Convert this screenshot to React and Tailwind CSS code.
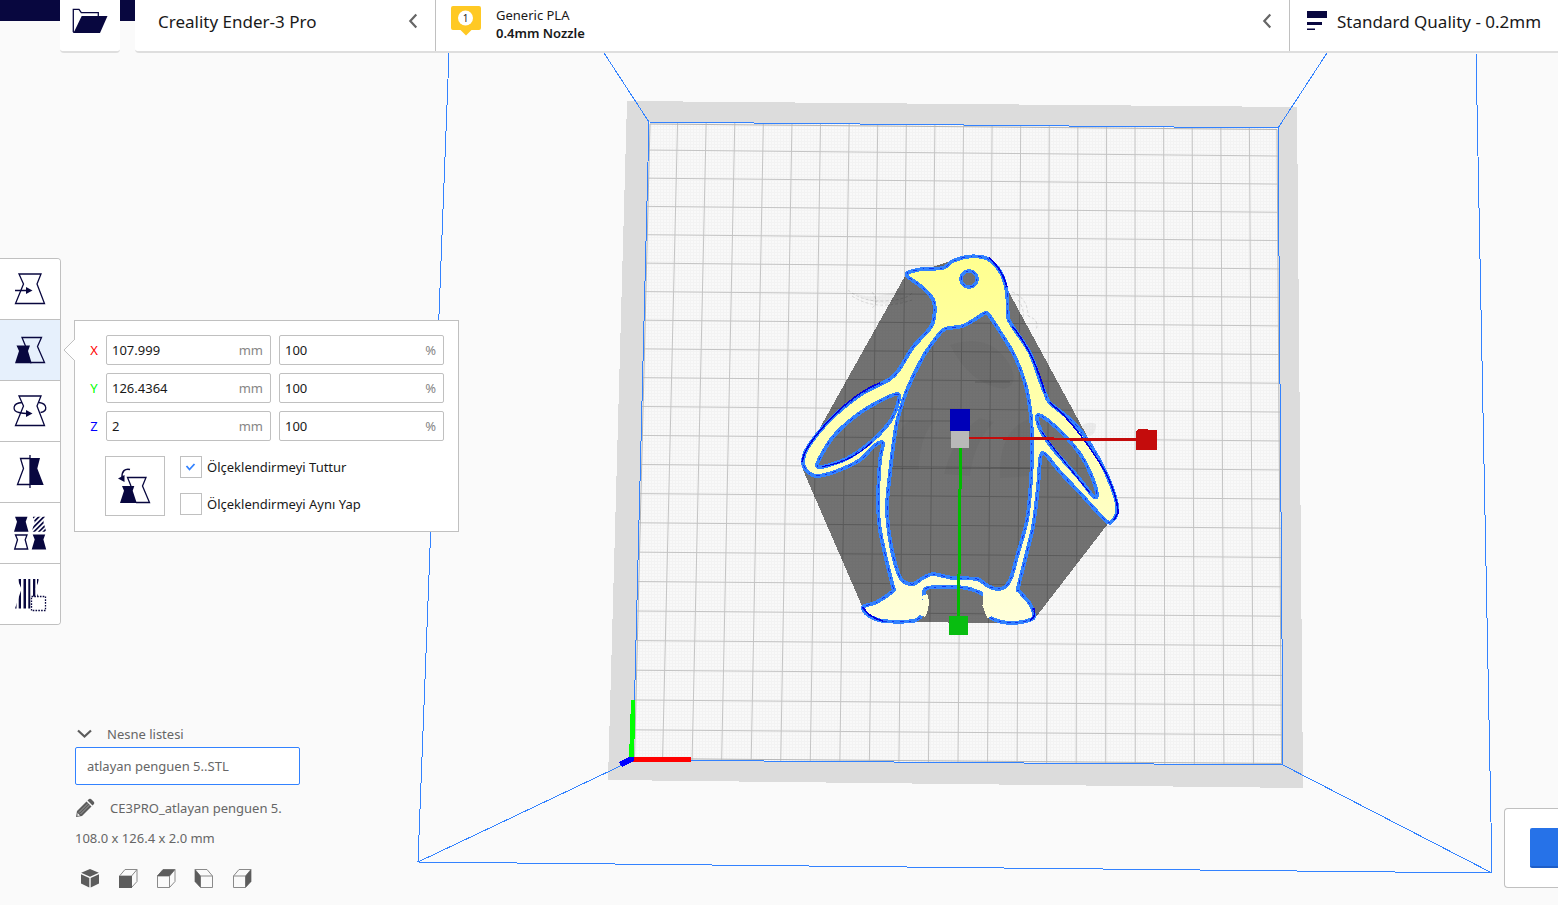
import React, { useState } from "react";

const NAVY = "#08073f";
const BLUE = "#3282ff";

/* ---------- geometry helpers ---------- */

// Closed Catmull-Rom curve through a list of points.
function smooth(pts) {
  const n = pts.length;
  const f = (v) => v.toFixed(1);
  let d = `M${pts[0][0]} ${pts[0][1]}`;
  for (let i = 0; i < n; i++) {
    const p0 = pts[(i - 1 + n) % n];
    const p1 = pts[i];
    const p2 = pts[(i + 1) % n];
    const p3 = pts[(i + 2) % n];
    const t = 7;
    d += `C${f(p1[0] + (p2[0] - p0[0]) / t)} ${f(p1[1] + (p2[1] - p0[1]) / t)} ${f(p2[0] - (p3[0] - p1[0]) / t)} ${f(p2[1] - (p3[1] - p1[1]) / t)} ${p2[0]} ${p2[1]}`;
  }
  return d + "Z";
}

const outer = [
  [907, 274], [909, 272], [923, 269], [943, 268], [953, 261], [970, 256.5], [988, 259], [1001, 273], [1007, 293], [1008, 317],
  [1013, 327], [1030, 353], [1041, 383], [1045, 393], [1050, 403], [1073, 422], [1090, 444], [1106, 473], [1116, 500], [1117, 512],
  [1113, 520], [1106, 521], [1080, 493], [1060, 472], [1047, 456], [1042, 453], [1040, 460], [1038, 487], [1033, 527], [1025, 560],
  [1018, 588], [1019, 591], [1030, 604], [1034, 616], [1030, 620], [1013, 623], [995, 620], [987, 613], [986, 597], [970, 589],
  [953, 587], [927, 588], [924, 596], [925, 604], [922, 615], [913, 621], [883, 621], [868, 615], [863, 607], [877, 602],
  [893, 591], [893, 587], [887, 563], [880, 530], [878, 503], [880, 460], [883, 445], [881, 442], [873, 447], [860, 460],
  [837, 471], [817, 476], [807, 471], [803, 462], [808, 447], [830, 420], [860, 395], [890, 379], [900, 368], [913, 347],
  [932, 325], [934, 302], [923, 288], [908, 277],
];
const belly = [
  [945, 329], [963, 326], [977, 318], [985, 313], [988, 314], [993, 321], [1013, 353], [1025, 383], [1031, 417], [1032, 453],
  [1031, 480], [1027, 520], [1018, 553], [1011, 578], [1005, 587], [997, 589], [988, 586], [977, 579], [953, 578], [933, 574],
  [923, 578], [913, 584], [903, 581], [897, 570], [890, 540], [887, 507], [890, 473], [894, 440], [898, 418], [907, 390],
  [923, 357], [937, 337],
];
const leftWing = [
  [897, 394], [899, 399], [891, 420], [872, 441], [846, 459], [821, 467], [818, 462], [833, 437], [857, 415], [880, 401],
];
const rightWing = [
  [1039, 415], [1037, 419], [1041, 431], [1054, 450], [1078, 477], [1093, 496], [1097, 495], [1092, 477], [1082, 457], [1066, 437], [1050, 422],
];
const eye = "M977 279a8 8 0 1 1-16 0a8 8 0 1 1 16 0Z";
const body = [smooth(outer), smooth(belly), smooth(leftWing), smooth(rightWing), eye].join(" ");

const CELLS = 22;
const columns = Array.from({ length: CELLS - 1 }, (_, k) => {
  const i = k + 1;
  return [649 + (629 * i) / CELLS, 122 + (6 * i) / CELLS, 633 + (650 * i) / CELLS, 760 + (5 * i) / CELLS];
});
const rows = Array.from({ length: CELLS - 1 }, (_, k) => {
  const i = k + 1;
  const s = (28 * i + 0.045 * i * i) / 638;
  return [649 - 16 * s, 122 + 638 * s, 1278 + 5 * s, 128 + 637 * s];
});

/* ---------- 3D view ---------- */

function BuildPlate() {
  return (
    <svg
      className="absolute inset-0 h-full w-full"
      viewBox="0 0 1558 905"
      preserveAspectRatio="xMidYMid slice"
      role="img"
      aria-label="atlayan penguen 5."
    >
      <defs>
        <pattern id="fine" width="3" height="3" patternUnits="userSpaceOnUse">
          <rect width="3" height="3" fill="#f9f9f9" />
          <path d="M0 .5H3M.5 0V3" stroke="#f3f3f3" />
        </pattern>
        <linearGradient id="model" x1="0" y1="0" x2="0" y2="1">
          <stop offset="0" stopColor="#ffff8f" />
          <stop offset=".5" stopColor="#ffffb4" />
          <stop offset="1" stopColor="#ffffda" />
        </linearGradient>
      </defs>

      <path d="M627 101L1297 107L1303 788L608 780Z" fill="#dcdcdc" shapeRendering="crispEdges" />
      <path d="M649 122L1278 128L1283 765L633 760Z" fill="url(#fine)" />
      <g stroke="#c4c4c4" strokeWidth="1">
        {columns.map(([a, b, c, d]) => (
          <line key={a} x1={a} y1={b} x2={c} y2={d} />
        ))}
        {rows.map(([a, b, c, d]) => (
          <line key={b} x1={a} y1={b} x2={c} y2={d} />
        ))}
      </g>
      <path d="M650 124L1277 129.500L1281.500 763.500L634.500 758.500Z" fill="none" stroke="#b4b4b4" />

      <g fill="none" stroke="#000" strokeOpacity=".13" strokeDasharray="3 2">
        <path d="M848 290q14 12 36 11t28-8M872 292q8 10 0 16M852 296q24 16 60 4" />
        <path d="M1012 292q16 6 16 24q12 4 8 14M1018 300q8 10 4 24" />
      </g>
      <path d="M1078 428q10-8 18-4q0 12-8 12" fill="#000" fillOpacity=".05" />
      <path d="M852 292q20 10 52-4v14q-30 6-52-10Z" fill="#000" fillOpacity=".04" />

      <path
        d="M905 276L953 260L1005 285L1092 445L1117 512L1036 617L1013 623L883 622L862 606L803 470V458Z"
        fill="#000"
        fillOpacity=".54"
        shapeRendering="crispEdges"
      />
      <g fill="#000" fillOpacity=".03">
        <path d="M950 345q40-14 60 20q10 20-6 24q-34-4-54-44Z" />
        <path d="M893 470q2-48 20-50l20 2q-14 18-14 48ZM944 474q10-40 36-56l14 4q-20 20-24 54ZM1000 478q-2-50 32-60v58Z" />
      </g>
      <path d="M890 468.500H1030M900 421H950M975 382H1010" stroke="#000" strokeOpacity=".18" fill="none" />

      <g shapeRendering="crispEdges">
        <path d={body} fill="url(#model)" fillRule="evenodd" stroke={BLUE} strokeWidth="3.800" />
        <path d={body} fill="none" stroke="#0a1ee8" strokeWidth=".800" strokeDasharray="2 5 4 6" />
        <path
          d="M863 607Q868 617 883 621M802 462Q804 447 830 419.500T880 383M989 258Q1002 268 1007 287M1013 327Q1034 353 1045 393M1050 403Q1075 422 1106 473Q1118 498 1118 513L1114 520M1030 620Q1036 618 1034 608"
          fill="none"
          stroke="#0000e0"
          strokeWidth="1.500"
        />
        <path d="M822 466.500Q850 463 872 442M1042 432Q1055 451 1090 493" fill="none" stroke="#0000e0" strokeWidth="1" />
        <path d="M924.500 595Q928 604 922.500 616M986.500 592L985.500 605L990 617" fill="none" stroke="#ffffd6" strokeWidth="6" />
      </g>

      <g fill="none" stroke={BLUE} strokeWidth="1" shapeRendering="crispEdges">
        <path d="M604 53L649 122L1278 128L1327 53" />
        <path d="M449 53L418 862L1492 873L1476 53" />
        <path d="M649 122L633 760L1283 765L1278 128" />
        <path d="M633 760L418 862M1283 765L1492 873" />
      </g>

      <g shapeRendering="crispEdges">
        <path d="M631 700H635.500L634 759H629Z" fill="#0f0" />
        <path d="M633 757H691V762H633Z" fill="#f00" />
        <path d="M619 762L629 757H634V761L622 767Z" fill="#00f" />
        <path d="M969 437L1137 439V441L969 438.500Z" fill="#c40c0c" stroke="#c40c0c" />
        <path d="M1136 431L1139 429L1157 430V450H1136Z" fill="#c40c0c" />
        <path d="M959 448H962L960 617H957Z" fill="#0b0" />
        <rect x="949" y="616" width="19" height="19" fill="#08bd10" />
        <rect x="951" y="430" width="18" height="18" fill="#b9b9b9" />
        <rect x="950" y="409" width="20" height="22" fill="#0000b8" />
      </g>
    </svg>
  );
}

/* ---------- icons ---------- */

function Tile({ children }) {
  return (
    <svg className="h-[60px] w-[60px]" viewBox="0 0 60 60" fill="none" stroke={NAVY} strokeWidth="1.300" aria-hidden="true">
      {children}
    </svg>
  );
}

const Glass = () => <path d="M19 15H41L37 25L44.500 44.500H15.500L23.500 25Z" />;

const MoveIcon = () => (
  <Tile>
    <Glass />
    <path d="M15 31.500H27" />
    <path d="M26 28L32.500 31.500L26 35Z" fill={NAVY} stroke="none" />
  </Tile>
);
const ScaleIcon = () => (
  <Tile>
    <path d="M25.500 26L22 17.500H41.500L37.500 26.500L44.500 42.500H30" />
    <path d="M16.500 25.500H30L28 31L31.700 43.300H15L19 31Z" fill={NAVY} stroke="none" />
  </Tile>
);
const RotateIcon = () => (
  <Tile>
    <Glass />
    <path d="M22 21.500C12 22 12 30 19 31.500Q23 32.500 27 32.500" />
    <path d="M39 21.500C47.500 22.500 48 30.500 40.500 31.500" />
    <path d="M26 29L32.500 32.500L26 36Z" fill={NAVY} stroke="none" />
  </Tile>
);
const MirrorIcon = () => (
  <Tile>
    <path d="M30 16.500H20.500L23.500 26.500L17.500 42.500H30" />
    <path d="M30 16H40L37.300 26.500L43.700 43H30Z" fill={NAVY} stroke="none" />
    <path d="M30 13V46" />
  </Tile>
);
const small = "M15 13.700H27.500L25.700 18.700L28.500 28.700H14L17 18.700Z";
const PerModelIcon = () => (
  <Tile>
    <defs>
      <clipPath id="small-glass">
        <path d={small} />
      </clipPath>
    </defs>
    <path d={small} fill={NAVY} stroke="none" />
    <g transform="translate(17.700 0)" clipPath="url(#small-glass)">
      <path d="M9 21L21 9M9 26L26 9M11 29L30 10M15.500 29.500L31 14M20.500 29.500L31 19M25 29.500L31 23.500" strokeWidth="1.700" />
    </g>
    <path d="M15.500 32H27L25.200 36.700L27.700 46H14.700L17.500 36.700Z" />
    <path d={small} transform="translate(17.700 17.700)" fill={NAVY} stroke="none" />
  </Tile>
);
const BlockerIcon = () => (
  <Tile>
    <defs>
      <clipPath id="blocker-glass">
        <path d="M17.300 15H39.500L35.500 25L42 44.500H15L21.500 25Z" />
      </clipPath>
    </defs>
    <g clipPath="url(#blocker-glass)" stroke="none" fill={NAVY}>
      <path d="M14.500 14H16.500V45H14.500ZM18.700 14H21V45H18.700ZM23.500 14H26V45H23.500ZM28.300 14H30.300V45H28.300ZM33 14H35.300V45H33ZM37 14H38.500V45H37Z" />
    </g>
    <rect x="31.500" y="32.500" width="14" height="14" fill="#fff" strokeDasharray="1.600 1.200" />
  </Tile>
);

const ResetScaleIcon = () => (
  <svg className="h-[58px] w-[58px]" viewBox="0 0 58 58" fill="none" stroke={NAVY} strokeWidth="1.300" aria-hidden="true">
    <path d="M25 29L21.500 20.500H40L36.500 29L43.500 45.500H30" />
    <path d="M16 29H28.300L26.700 33.700L30.700 46H14L18 33.700Z" fill={NAVY} stroke="none" />
    <path d="M24 12.500Q16 11 16 20" strokeWidth="1.500" />
    <path d="M12 21.500L18.500 18V25Z" fill={NAVY} stroke="none" />
  </svg>
);

const FolderIcon = () => (
  <svg className="h-[51px] w-[60px]" viewBox="0 0 60 51" aria-hidden="true">
    <path d="M13.300 32V9.300H19L21.300 12.700H38.300V16" fill="none" stroke={NAVY} strokeWidth="1.300" />
    <path d="M21.700 16H47.500L40 33H12.700L14.500 31Z" fill={NAVY} />
  </svg>
);

const ChevronLeft = () => (
  <svg className="h-4 w-2.5" viewBox="0 0 10 16" fill="none" stroke="#666" strokeWidth="2.200" aria-hidden="true">
    <path d="M8.300 1.500L2.300 8L8.300 14.500" />
  </svg>
);

const views = [
  {
    name: "3D",
    art: (
      <g fill="#5c5c5c">
        <path d="M10 1L18.800 4.800L10 8.700L1.200 4.800Z" />
        <path d="M1 6.200L9.300 10V19.500L1 15.500Z" />
        <path d="M19 6.200L10.700 10V19.500L19 15.500Z" />
      </g>
    ),
  },
  { name: "Front", face: "M1 8H14V20H1Z" },
  { name: "Top", face: "M1 8L7 1.500H19L13.500 8Z" },
  { name: "Left", mirror: true, face: "M13.500 8L19 1.500V13.500L13.500 19.500Z" },
  { name: "Right", face: "M13.500 8L19 1.500V13.500L13.500 19.500Z" },
];

const ViewIcon = ({ view }) => (
  <svg className="h-5 w-5" viewBox="0 0 20 20" aria-hidden="true">
    {view.art || (
      <g transform={view.mirror ? "translate(20 0) scale(-1 1)" : undefined}>
        <path d="M1.500 8L7 1.500H19V13.500L13.500 19.500H1.500ZM1.500 8H13.500V19.500M13.500 8L19 1.500" fill="none" stroke="#8a8a8a" />
        <path d={view.face} fill="#5c5c5c" />
      </g>
    )}
  </svg>
);

/* ---------- interface ---------- */

function Header() {
  return (
    <header className="relative flex items-start text-[#191919]">
      <div className="h-[21px] w-[60px] shrink-0 bg-[#08073f]" />
      <button type="button" aria-label="Open file" className="shrink-0 rounded-b border-b-2 border-[#dedede] bg-white">
        <FolderIcon />
      </button>
      <div className="h-[21px] w-[15px] shrink-0 bg-[#08073f]" />
      <div className="flex min-w-0 flex-1 rounded-bl border-b-2 border-[#dedede] bg-white">
        <button type="button" className="flex h-[51px] w-[301px] shrink-0 items-start justify-between border-r border-[#c0c0c0] pt-2.5 pr-[17px] pl-[23px] text-left">
          <span className="text-[17px] leading-6">Creality Ender-3 Pro</span>
          <span className="pt-[3px]"><ChevronLeft /></span>
        </button>
        <button type="button" className="flex h-[51px] min-w-0 flex-1 items-start border-r border-[#c0c0c0] pt-1.5 pr-[17px] pl-[15px] text-left">
          <svg className="h-[30px] w-[30px]" viewBox="0 0 30 30" aria-hidden="true">
            <path d="M2 0H28Q30 0 30 2V22Q30 24 28 24H20.500L15 29.500L9.500 24H2Q0 24 0 22V2Q0 0 2 0Z" fill="#ffc924" />
            <circle cx="14.500" cy="12" r="7.500" fill="#fff" />
            <text x="14.500" y="16" textAnchor="middle" fontSize="10" fill="#191919">1</text>
          </svg>
          <span className="ml-[15px] flex flex-1 flex-col text-[13px] leading-[18px]">
            <span>Generic PLA</span>
            <span className="font-semibold">0.4mm Nozzle</span>
          </span>
          <span className="pt-[7px]"><ChevronLeft /></span>
        </button>
        <button type="button" className="flex h-[51px] w-[268px] shrink-0 items-start gap-[10px] overflow-hidden pt-2.5 pl-[17px] text-left">
          <svg className="h-5 w-5 shrink-0" viewBox="0 0 20 20" fill={NAVY} aria-hidden="true">
            <path d="M0 1H20V8H0ZM0 12H15V15H0ZM0 18.500H8V20H0Z" />
          </svg>
          <span className="text-[17px] leading-6 whitespace-nowrap">Standard Quality - 0.2mm</span>
        </button>
      </div>
    </header>
  );
}

const tools = [
  ["Move", MoveIcon],
  ["Scale", ScaleIcon],
  ["Rotate", RotateIcon],
  ["Mirror", MirrorIcon],
  ["Per model settings", PerModelIcon],
  ["Support blocker", BlockerIcon],
];

function Toolbar() {
  return (
    <nav aria-label="Tools" className="flex w-[61px] shrink-0 flex-col divide-y divide-[#c0c0c0] overflow-hidden rounded-r border-y border-r border-[#c0c0c0] bg-white">
      {tools.map(([name, Icon]) => (
        <button key={name} type="button" aria-label={name} className={name === "Scale" ? "bg-[#e6f0fc]" : "bg-white"}>
          <Icon />
        </button>
      ))}
    </nav>
  );
}

function Field({ id, label, value, unit }) {
  return (
    <div className="flex h-[30px] min-w-0 flex-1 items-center rounded-[2px] border border-[#c0c0c0] bg-white pr-[7px] pl-[5px]">
      <input id={id} aria-label={label} defaultValue={value} className="min-w-0 flex-1 bg-transparent text-[#191919] outline-none" />
      <span className="text-[#868686]">{unit}</span>
    </div>
  );
}

const axes = [
  ["X", "107.999", "text-[#ff0000]"],
  ["Y", "126.4364", "text-[#00ff00]"],
  ["Z", "2", "text-[#0000ff]"],
];

function Check({ label, initial }) {
  const [on, setOn] = useState(initial);
  return (
    <label className="flex items-center gap-[5px] text-[#191919]">
      <span className="grid">
        <input
          type="checkbox"
          checked={on}
          onChange={() => setOn(!on)}
          className="col-start-1 row-start-1 h-[22px] w-[22px] appearance-none border border-[#c0c0c0] bg-white"
        />
        {on && (
          <svg className="pointer-events-none col-start-1 row-start-1 h-[22px] w-[22px]" viewBox="0 0 22 22" fill="none" stroke={BLUE} strokeWidth="1.800" aria-hidden="true">
            <path d="M6.500 10L9.500 13.500L14.500 8" />
          </svg>
        )}
      </span>
      {label}
    </label>
  );
}

function ScalePanel() {
  return (
    <section aria-label="Scale" className="relative mt-[62px] ml-[13px] w-[385px] border border-[#c0c0c0] bg-white pt-3.5 pr-3.5 pb-[15px] pl-[13px]">
      <svg className="absolute top-[17px] -left-3 h-6 w-3" viewBox="0 0 12 24" aria-hidden="true">
        <path d="M12 1L1 12L12 23Z" fill="#fff" />
        <path d="M12 1L1 12L12 23" fill="none" stroke="#c0c0c0" />
      </svg>
      <div className="flex flex-col gap-2">
        {axes.map(([axis, size, color]) => (
          <div key={axis} className="flex items-center">
            <label htmlFor={`size-${axis}`} className={`w-[18px] ${color}`}>
              <span className="block w-3 text-center">{axis}</span>
            </label>
            <div className="flex min-w-0 flex-1 gap-2">
              <Field id={`size-${axis}`} label={`${axis} mm`} value={size} unit="mm" />
              <Field id={`percent-${axis}`} label={`${axis} %`} value="100" unit="%" />
            </div>
          </div>
        ))}
      </div>
      <div className="mt-[15px] ml-[17px] flex gap-[15px]">
        <button type="button" aria-label="Reset scale" className="h-[60px] w-[60px] shrink-0 border border-[#c0c0c0] bg-white">
          <ResetScaleIcon />
        </button>
        <div className="flex flex-col gap-[15px]">
          <Check label="Ölçeklendirmeyi Tuttur" initial={true} />
          <Check label="Ölçeklendirmeyi Aynı Yap" initial={false} />
        </div>
      </div>
    </section>
  );
}

function ObjectList() {
  return (
    <section className="ml-[75px] flex w-[225px] flex-col text-[#666666]">
      <button type="button" className="flex h-[26px] items-center gap-[15px] pl-0.5 text-left">
        <svg className="h-2.5 w-[15px]" viewBox="0 0 15 10" fill="none" stroke="#5c5c5c" strokeWidth="2.200" aria-hidden="true">
          <path d="M1 1.500L7.500 7.500L14 1.500" />
        </svg>
        Nesne listesi
      </button>
      <button type="button" className="h-[38px] rounded-[2px] border border-[#3282ff] bg-white pl-[11px] text-left">
        atlayan penguen 5..STL
      </button>
      <label className="mt-[7px] flex h-8 items-center gap-[15px]">
        <svg className="h-5 w-5 shrink-0" viewBox="0 0 20 20" fill="#5c5c5c" aria-hidden="true">
          <path d="M1 19L2 13L11.500 3.500L16.500 8.500L7 18Z" />
          <path d="M12.500 2.500L14 1Q15 .500 16 1L19 4Q19.500 5 19 6L17.500 7.500Z" />
          <path d="M4 14.500L13 5.500M5.500 16L14.500 7" stroke="#fafafa" strokeWidth=".400" />
          <path d="M2.500 15L5 17.500L2.500 18Z" fill="#fafafa" />
        </svg>
        <input aria-label="Job name" defaultValue="CE3PRO_atlayan penguen 5." className="min-w-0 flex-1 bg-transparent outline-none" />
      </label>
      <p className="h-7 leading-7">108.0 x 126.4 x 2.0 mm</p>
      <div className="mt-4 ml-[5px] flex gap-[18px]">
        {views.map((v) => (
          <button key={v.name} type="button" aria-label={v.name}>
            <ViewIcon view={v} />
          </button>
        ))}
      </div>
    </section>
  );
}

export default function App() {
  return (
    <div className="relative flex min-h-screen flex-col overflow-hidden bg-[#fafafa] font-['Noto_Sans',sans-serif] text-[13px] leading-[18px]">
      <BuildPlate />
      <Header />
      <main className="relative mt-[205px] flex items-start">
        <Toolbar />
        <ScalePanel />
      </main>
      <footer className="relative mt-auto flex items-end justify-between pb-[17px]">
        <ObjectList />
        <div className="flex h-20 w-[54px] items-center rounded-l border-y border-l border-[#c0c0c0] bg-white pl-[25px]">
          <button type="button" aria-label="Slice" className="h-10 flex-1 rounded-l-[2px] border-b-2 border-[#1e5ec8] bg-[#2672e8]" />
        </div>
      </footer>
    </div>
  );
}
